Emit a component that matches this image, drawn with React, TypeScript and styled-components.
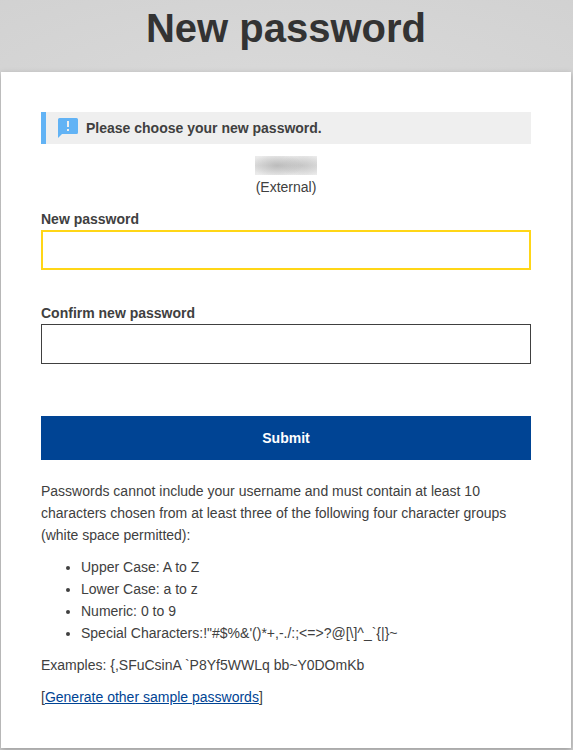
import React from "react";
import styled, { createGlobalStyle } from "styled-components";

const GlobalStyle = createGlobalStyle`
  *, *::before, *::after { box-sizing: border-box; }
  body {
    margin: 0;
    background: #d3d3d3;
    color: #404040;
    font-family: Arial, "Liberation Sans", sans-serif;
    font-size: 14px;
    line-height: 22px;
  }
`;

const Page = styled.main`
  min-height: 100vh;
  padding: 0 2px 2px 1px;
  background: radial-gradient(ellipse 600px 200px at 50% 100px, #dadada 0, #cecece 100%);
`;

const Title = styled.h1`
  margin: 0;
  padding: 4px 0 20px;
  color: #333333;
  font-size: 40px;
  font-weight: 700;
  line-height: 48px;
  text-align: center;
`;

const Card = styled.section`
  padding: 40px;
  background: #ffffff;
  box-shadow: 0 2px 6px rgba(0, 0, 0, 0.25);
`;

const Notice = styled.div`
  display: flex;
  align-items: center;
  gap: 8px;
  height: 32px;
  padding-left: 12px;
  border-left: 5px solid #62b3f5;
  background: #efefef;
  font-weight: 700;
`;

const NoticeIcon = styled.svg`
  width: 20px;
  height: 20px;
  fill: #62b3f5;
`;

const Account = styled.div`
  display: flex;
  flex-direction: column;
  align-items: center;
  margin: 12px 0 10px;
`;

const HiddenName = styled.span`
  width: 62px;
  height: 19px;
  margin-bottom: 1px;
  background:
    radial-gradient(ellipse 26px 12px at 36% 50%, rgba(165, 165, 165, 0.6), transparent),
    radial-gradient(ellipse 22px 12px at 76% 50%, rgba(185, 185, 185, 0.6), transparent),
    linear-gradient(to bottom, #ececec, #dddddd 50%, #ececec);
`;

const Field = styled.div<{ $after: number }>`
  display: flex;
  flex-direction: column;
  margin-bottom: ${({ $after }) => $after}px;
`;

const Label = styled.label`
  font-weight: 700;
`;

const PasswordInput = styled.input<{ $active?: boolean }>`
  width: 100%;
  height: 40px;
  padding: 0 12px;
  border: ${({ $active }) => ($active ? "2px solid #ffd617" : "1px solid #404040")};
  border-radius: 0;
  outline: none;
  background: #ffffff;
  color: inherit;
  font: inherit;
`;

const SubmitButton = styled.button`
  display: block;
  width: 100%;
  height: 44px;
  margin-bottom: 20px;
  border: 0;
  background: #004494;
  color: #ffffff;
  font: inherit;
  font-weight: 700;
  cursor: pointer;
`;

const Paragraph = styled.p`
  margin: 0;
`;

const Rules = styled.ul`
  margin: 10px 0;
  padding-left: 40px;
`;

const SampleLine = styled.p`
  margin: 10px 0 0;
`;

const SampleLink = styled.a`
  color: #004494;
  text-decoration: underline;
`;

const rules = [
  "Upper Case: A to Z",
  "Lower Case: a to z",
  "Numeric: 0 to 9",
  "Special Characters:!\"#$%&'()*+,-./:;<=>?@[\\]^_`{|}~",
];

export default function App() {
  return (
    <>
      <GlobalStyle />
      <Page>
        <Title>New password</Title>
        <Card>
          <Notice role="status">
            <NoticeIcon viewBox="0 0 20 20" aria-hidden="true">
              <path
                fillRule="evenodd"
                d="M1.5 0h17A1.5 1.5 0 0 1 20 1.5v13a1.5 1.5 0 0 1-1.5 1.5H4l-4 4V1.5A1.5 1.5 0 0 1 1.5 0ZM9 3v6h2V3H9Zm0 8v2h2v-2H9Z"
              />
            </NoticeIcon>
            <span>Please choose your new password.</span>
          </Notice>
          <Account>
            <HiddenName role="img" aria-label="Account name" />
            <span>(External)</span>
          </Account>
          <form onSubmit={(event) => event.preventDefault()}>
            <Field $after={32}>
              <Label htmlFor="new-password">New password</Label>
              <PasswordInput id="new-password" type="password" autoComplete="new-password" $active />
            </Field>
            <Field $after={52}>
              <Label htmlFor="confirm-password">Confirm new password</Label>
              <PasswordInput id="confirm-password" type="password" autoComplete="new-password" />
            </Field>
            <SubmitButton type="submit">Submit</SubmitButton>
          </form>
          <Paragraph>
            Passwords cannot include your username and must contain at least 10 characters chosen from
            at least three of the following four character groups (white space permitted):
          </Paragraph>
          <Rules>
            {rules.map((rule) => (
              <li key={rule}>{rule}</li>
            ))}
          </Rules>
          <Paragraph>{"Examples: {,SFuCsinA `P8Yf5WWLq bb~Y0DOmKb"}</Paragraph>
          <SampleLine>
            [<SampleLink href="#samples">Generate other sample passwords</SampleLink>]
          </SampleLine>
        </Card>
      </Page>
    </>
  );
}
